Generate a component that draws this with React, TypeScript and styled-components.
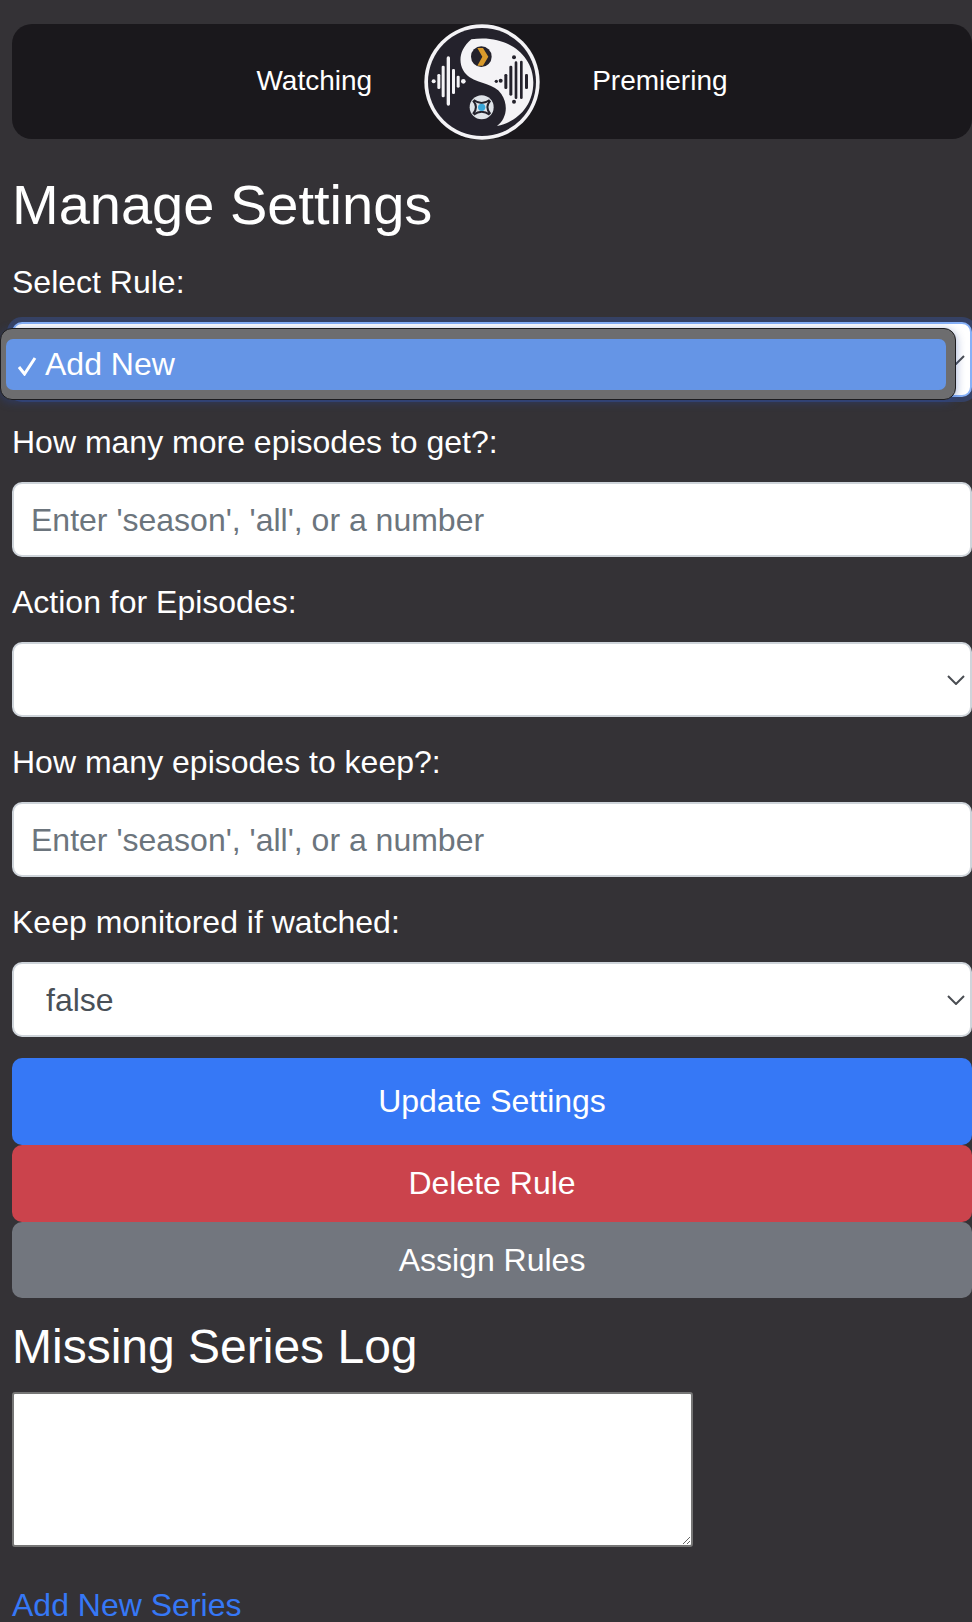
import { FunctionComponent } from "react";
import styled, { createGlobalStyle } from "styled-components";

const GlobalStyle = createGlobalStyle`
  html, body {
    margin: 0;
    padding: 0;
    background: #343236;
    overflow: hidden;
  }
  * {
    box-sizing: border-box;
  }
`;

const Logo: FunctionComponent = () => (
  <LogoSvg viewBox="0 0 354 348">
    <circle cx="177" cy="174" r="173" fill="#f4f3f6" />
    <circle cx="177" cy="174" r="162" fill="#24222c" />
    <path
      d="M145 46 C250 30 331 92 331 175 C331 245 285 293 222 306 C250 285 258 245 235 210 C215 180 170 180 140 160 C110 140 95 88 145 46 Z"
      fill="#f4f3f6"
    />
    <circle cx="175" cy="98" r="31" fill="#24222c" />
    <path d="M163 72 L180 72 L196 98 L180 125 L163 125 L178 98 Z" fill="#d99a2b" />
    <g fill="#f4f3f6">
      <circle cx="32" cy="172" r="6" />
      <rect x="43" y="150" width="9" height="45" rx="4" />
      <rect x="56" y="125" width="9" height="95" rx="4" />
      <rect x="71" y="97" width="10" height="148" rx="5" />
      <rect x="87" y="135" width="9" height="75" rx="4" />
      <rect x="101" y="155" width="9" height="36" rx="4" />
      <circle cx="121" cy="172" r="7" />
    </g>
    <g fill="#24222c">
      <circle cx="220" cy="172" r="5" />
      <circle cx="233" cy="170" r="6" />
      <rect x="244" y="150" width="9" height="45" rx="4" />
      <rect x="259" y="125" width="9" height="90" rx="4" />
      <circle cx="273" cy="100" r="6" />
      <rect x="275" y="112" width="8" height="113" rx="4" />
      <rect x="291" y="110" width="8" height="115" rx="4" />
      <circle cx="273" cy="233" r="6" />
      <rect x="306" y="150" width="9" height="45" rx="4" />
    </g>
    <circle cx="176" cy="250" r="36" fill="#dfe3e8" />
    <path
      d="M152 228 Q176 246 200 228 M152 272 Q176 254 200 272 M150 230 Q168 250 150 270 M202 230 Q184 250 202 270"
      fill="none"
      stroke="#24222c"
      strokeWidth="6"
    />
    <circle cx="176" cy="250" r="11" fill="#3aa6d8" />
  </LogoSvg>
);

const Chevron: FunctionComponent = () => (
  <ChevronSvg viewBox="0 0 18 10">
    <path d="M1 1 L9 9 L17 1" fill="none" stroke="#4a4d52" strokeWidth="2" />
  </ChevronSvg>
);

const App: FunctionComponent = () => {
  return (
    <Page>
      <GlobalStyle />
      <Nav>
        <NavLink>Watching</NavLink>
        <Logo />
        <NavLink>Premiering</NavLink>
      </Nav>
      <Title>Manage Settings</Title>

      <Label>Select Rule:</Label>
      <SelectWrap>
        <FocusedSelect aria-label="Select Rule" />
        <Chevron />
        <Popup>
          <PopupItem>
            <CheckSvg viewBox="0 0 20 20">
              <path d="M2 11 L7.5 18 L18 2" fill="none" stroke="#fff" strokeWidth="3" />
            </CheckSvg>
            Add New
          </PopupItem>
        </Popup>
      </SelectWrap>

      <Label>How many more episodes to get?:</Label>
      <Input placeholder="Enter 'season', 'all', or a number" />

      <Label>Action for Episodes:</Label>
      <SelectWrap>
        <Select aria-label="Action for Episodes" />
        <Chevron />
      </SelectWrap>

      <Label>How many episodes to keep?:</Label>
      <Input placeholder="Enter 'season', 'all', or a number" />

      <Label>Keep monitored if watched:</Label>
      <SelectWrap>
        <Select aria-label="Keep monitored if watched" defaultValue="false">
          <option value="false">false</option>
          <option value="true">true</option>
        </Select>
        <Chevron />
      </SelectWrap>

      <Buttons>
        <Button $color="#3678f6" $height={87}>
          Update Settings
        </Button>
        <Button $color="#cb434c" $height={77}>
          Delete Rule
        </Button>
        <Button $color="#72767e" $height={76}>
          Assign Rules
        </Button>
      </Buttons>

      <SubTitle>Missing Series Log</SubTitle>
      <LogBox />
      <AddLink href="#">Add New Series</AddLink>
    </Page>
  );
};

const Page = styled.div`
  padding: 24px 0 0 12px;
  width: 972px;
  height: 1622px;
  overflow: hidden;
  font-family: "Liberation Sans", Arial, sans-serif;
  color: #fff;
`;

const Nav = styled.nav`
  display: flex;
  align-items: center;
  justify-content: center;
  gap: 51px;
  height: 115px;
  background: #1a181c;
  border-radius: 20px;
`;

const NavLink = styled.a`
  padding-bottom: 2px;
  font-size: 28px;
  color: #fff;
`;

const LogoSvg = styled.svg`
  width: 118px;
  height: 116px;
  flex: none;
`;

const Title = styled.h1`
  margin: 33px 0 0;
  font-size: 56px;
  line-height: 65px;
  font-weight: 400;
`;

const Label = styled.label`
  display: block;
  margin: 29px 0 0;
  height: 56px;
  font-size: 32px;
  line-height: 32px;
`;

const SelectWrap = styled.div`
  position: relative;
  width: 960px;
`;

const Select = styled.select`
  display: block;
  width: 100%;
  height: 75px;
  padding: 0 32px;
  appearance: none;
  background: #fff;
  border: 2px solid #ced4da;
  border-radius: 10px;
  font-family: inherit;
  font-size: 32px;
  color: #495057;
`;

const FocusedSelect = styled(Select)`
  border-color: #86b0f7;
  box-shadow: 0 0 0 5px rgba(55, 110, 240, 0.25);
`;

const ChevronSvg = styled.svg`
  position: absolute;
  right: 7px;
  top: 50%;
  width: 18px;
  height: 10px;
  margin-top: -5px;
`;

const Popup = styled.div`
  position: absolute;
  left: -12px;
  top: 6px;
  width: 956px;
  height: 72px;
  padding: 10px 9px 10px 5px;
  background: #6d6d6f;
  border: 1px solid #1c1c1f;
  border-radius: 12px;
  box-shadow: 0 2px 10px rgba(40, 70, 160, 0.45);
`;

const PopupItem = styled.div`
  display: flex;
  align-items: center;
  height: 51px;
  padding-left: 11px;
  background: #6595e6;
  border-radius: 7px;
  font-size: 32px;
  color: #fff;
`;

const CheckSvg = styled.svg`
  flex: none;
  width: 20px;
  height: 20px;
  margin: 2px 8px 0 0;
`;

const Input = styled.input`
  display: block;
  width: 960px;
  height: 75px;
  padding: 2px 17px 0;
  background: #fff;
  border: 2px solid #ced4da;
  border-radius: 10px;
  font-family: inherit;
  font-size: 32px;
  color: #495057;
  &::placeholder {
    color: #6c757d;
  }
`;

const Buttons = styled.div`
  display: flex;
  flex-direction: column;
  margin-top: 21px;
  width: 960px;
`;

const Button = styled.button<{ $color: string; $height: number }>`
  height: ${(props) => props.$height}px;
  background: ${(props) => props.$color};
  border: none;
  border-radius: 10px;
  font-family: inherit;
  font-size: 32px;
  color: #fff;
`;

const SubTitle = styled.h2`
  margin: 21px 0 0;
  font-size: 48px;
  line-height: 55px;
  font-weight: 400;
`;

const LogBox = styled.textarea`
  display: block;
  margin-top: 18px;
  width: 681px;
  height: 155px;
  background: #fff;
  border: 2px solid #767676;
  border-radius: 3px;
`;

const AddLink = styled.a`
  display: block;
  margin-top: 42px;
  font-size: 32px;
  line-height: 32px;
  color: #3678f6;
  text-decoration: none;
`;

export default App;
